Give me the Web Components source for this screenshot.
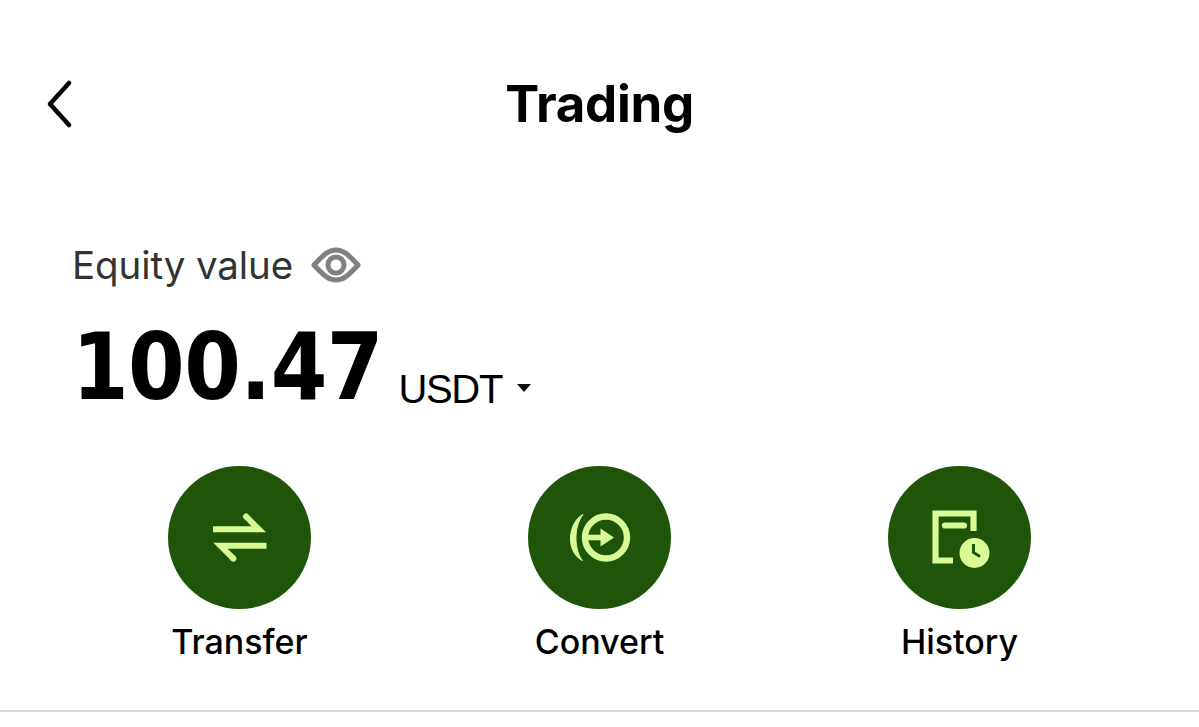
<!DOCTYPE html>
<html>
<head>
<meta charset="utf-8">
<title>Trading</title>
<style>
    html, body { margin: 0; background: #fff; overflow: hidden; }
    body { font-family: Inter, "Liberation Sans", sans-serif; color: #000; }
</style>
</head>
<body>
<trading-screen>
    <top-bar title="Trading"></top-bar>
    <equity-summary label="Equity value" amount="100.47" currency="USDT"></equity-summary>
    <div slot="actions">
        <action-button label="Transfer" icon="transfer"></action-button>
        <action-button label="Convert" icon="convert"></action-button>
        <action-button label="History" icon="history"></action-button>
    </div>
</trading-screen>

<script>
const ICONS = {
    transfer: `<svg width="143" height="143" viewBox="0 0 143 143" fill="none" stroke="#d8fb96" stroke-width="6">
        <path d="M45 63.3H90.8L78 50.5"/>
        <path d="M98.5 79.8H52.6L65.4 92.6"/>
        <path d="M79 51.5L78 50.5M64.4 91.6L65.4 92.6" stroke-linecap="round"/>
    </svg>`,
    convert: `<svg width="143" height="143" viewBox="0 0 143 143" fill="none" stroke="#d8fb96">
        <circle cx="78" cy="71.5" r="21" stroke-width="6.4"/>
        <path d="M58 71.5H76" stroke-width="5.6"/>
        <path d="M72.5 62.5L86 71.5L72.5 80.5Z" fill="#d8fb96" stroke="none"/>
        <path d="M55 48.5C40 56 37 86 54.5 94.5C47 86 44.5 62 55 48.5Z" fill="#d8fb96" stroke="#d8fb96" stroke-width="1" stroke-linejoin="round"/>
    </svg>`,
    history: `<svg width="143" height="143" viewBox="0 0 143 143" fill="none" stroke="#d8fb96" stroke-width="6.2">
        <path d="M65 94.5H47.5V47.5H85.5V65" stroke-linejoin="miter"/>
        <path d="M57 59.5H76" stroke-linecap="round"/>
        <circle cx="86.5" cy="87" r="15" fill="#d8fb96" stroke="none"/>
        <path d="M85.5 78V86.5L92 90.5" stroke="#1e5508" stroke-width="3"/>
    </svg>`
};

class TradingScreen extends HTMLElement {
    connectedCallback() {
        this.attachShadow({ mode: 'open' });
        this.shadowRoot.innerHTML = `
            <style>
                :host {
                    display: flex;
                    flex-direction: column;
                    height: 712px;
                    box-sizing: border-box;
                    border-bottom: 2px solid #d4d4d4;
                }
                .actions {
                    display: block;
                    padding: 0 60px 0 59.5px;
                }
                ::slotted([slot="actions"]) {
                    display: grid;
                    grid-template-columns: repeat(3, 360px);
                }
            </style>
            <slot></slot>
            <div class="actions"><slot name="actions"></slot></div>
        `;
    }
}

class TopBar extends HTMLElement {
    connectedCallback() {
        this.attachShadow({ mode: 'open' });
        this.shadowRoot.innerHTML = `
            <style>
                :host {
                    display: grid;
                    grid-template-columns: 1fr auto 1fr;
                    align-items: center;
                    height: 132px;
                    padding: 38px 46px 0;
                }
                svg { display: block; }
                h1 {
                    margin: 0;
                    font-size: 51px;
                    line-height: 60px;
                    font-weight: 700;
                    letter-spacing: -0.3px;
                }
            </style>
            <svg width="28" height="50" viewBox="0 0 28 50" fill="none" stroke="#000" stroke-width="4.6" stroke-linecap="round" stroke-linejoin="round">
                <path d="M23 4L4 25L23 46"/>
            </svg>
            <h1>${this.getAttribute('title')}</h1>
            <span></span>
        `;
    }
}

class EquitySummary extends HTMLElement {
    connectedCallback() {
        this.attachShadow({ mode: 'open' });
        this.shadowRoot.innerHTML = `
            <style>
                :host {
                    display: block;
                    padding: 65px 0 0 72px;
                    height: 295.5px;
                    box-sizing: border-box;
                }
                .label {
                    display: flex;
                    align-items: center;
                    gap: 18px;
                    height: 60px;
                    font-size: 38.5px;
                    letter-spacing: -0.1px;
                    color: #333;
                }
                .amount {
                    margin-top: 21px;
                    height: 110px;
                    white-space: nowrap;
                }
                .value {
                    display: inline-block;
                    font-family: "DejaVu Sans", sans-serif;
                    font-size: 81.5px;
                    font-weight: 700;
                    line-height: 110px;
                    letter-spacing: -0.6px;
                    transform: scaleY(1.135);
                    transform-origin: 0 84px;
                }
                .currency {
                    font-family: "Liberation Sans", sans-serif;
                    font-size: 40px;
                    letter-spacing: -1.3px;
                    margin-left: 11px;
                    vertical-align: -4px;
                }
                .caret { margin-left: 10px; vertical-align: 7px; }
            </style>
            <div class="label">
                <span>${this.getAttribute('label')}</span>
                <svg width="50" height="36" viewBox="0 0 50 36" fill="none" stroke="#808080" stroke-width="5">
                    <path d="M3 18C13 7 18 3 25 3S37 7 47 18C37 29 32 33 25 33S13 29 3 18Z" stroke-linejoin="round"/>
                    <circle cx="25" cy="18" r="8"/>
                </svg>
            </div>
            <div class="amount">
                <span class="value">${this.getAttribute('amount')}</span>
                <span class="currency">${this.getAttribute('currency')}</span>
                <svg class="caret" width="14" height="8" viewBox="0 0 14 8"><path d="M0 0H14L7 8Z" fill="#111"/></svg>
            </div>
        `;
    }
}

class ActionButton extends HTMLElement {
    connectedCallback() {
        this.attachShadow({ mode: 'open' });
        this.shadowRoot.innerHTML = `
            <style>
                :host {
                    display: flex;
                    flex-direction: column;
                    align-items: center;
                    gap: 11px;
                }
                .circle {
                    width: 143px;
                    height: 143px;
                    border-radius: 50%;
                    background: #1e5508;
                }
                svg { display: block; }
                .text {
                    font-size: 34px;
                    font-weight: 500;
                    line-height: 44px;
                }
            </style>
            <div class="circle">${ICONS[this.getAttribute('icon')]}</div>
            <div class="text">${this.getAttribute('label')}</div>
        `;
    }
}

customElements.define('trading-screen', TradingScreen);
customElements.define('top-bar', TopBar);
customElements.define('equity-summary', EquitySummary);
customElements.define('action-button', ActionButton);
</script>
</body>
</html>
